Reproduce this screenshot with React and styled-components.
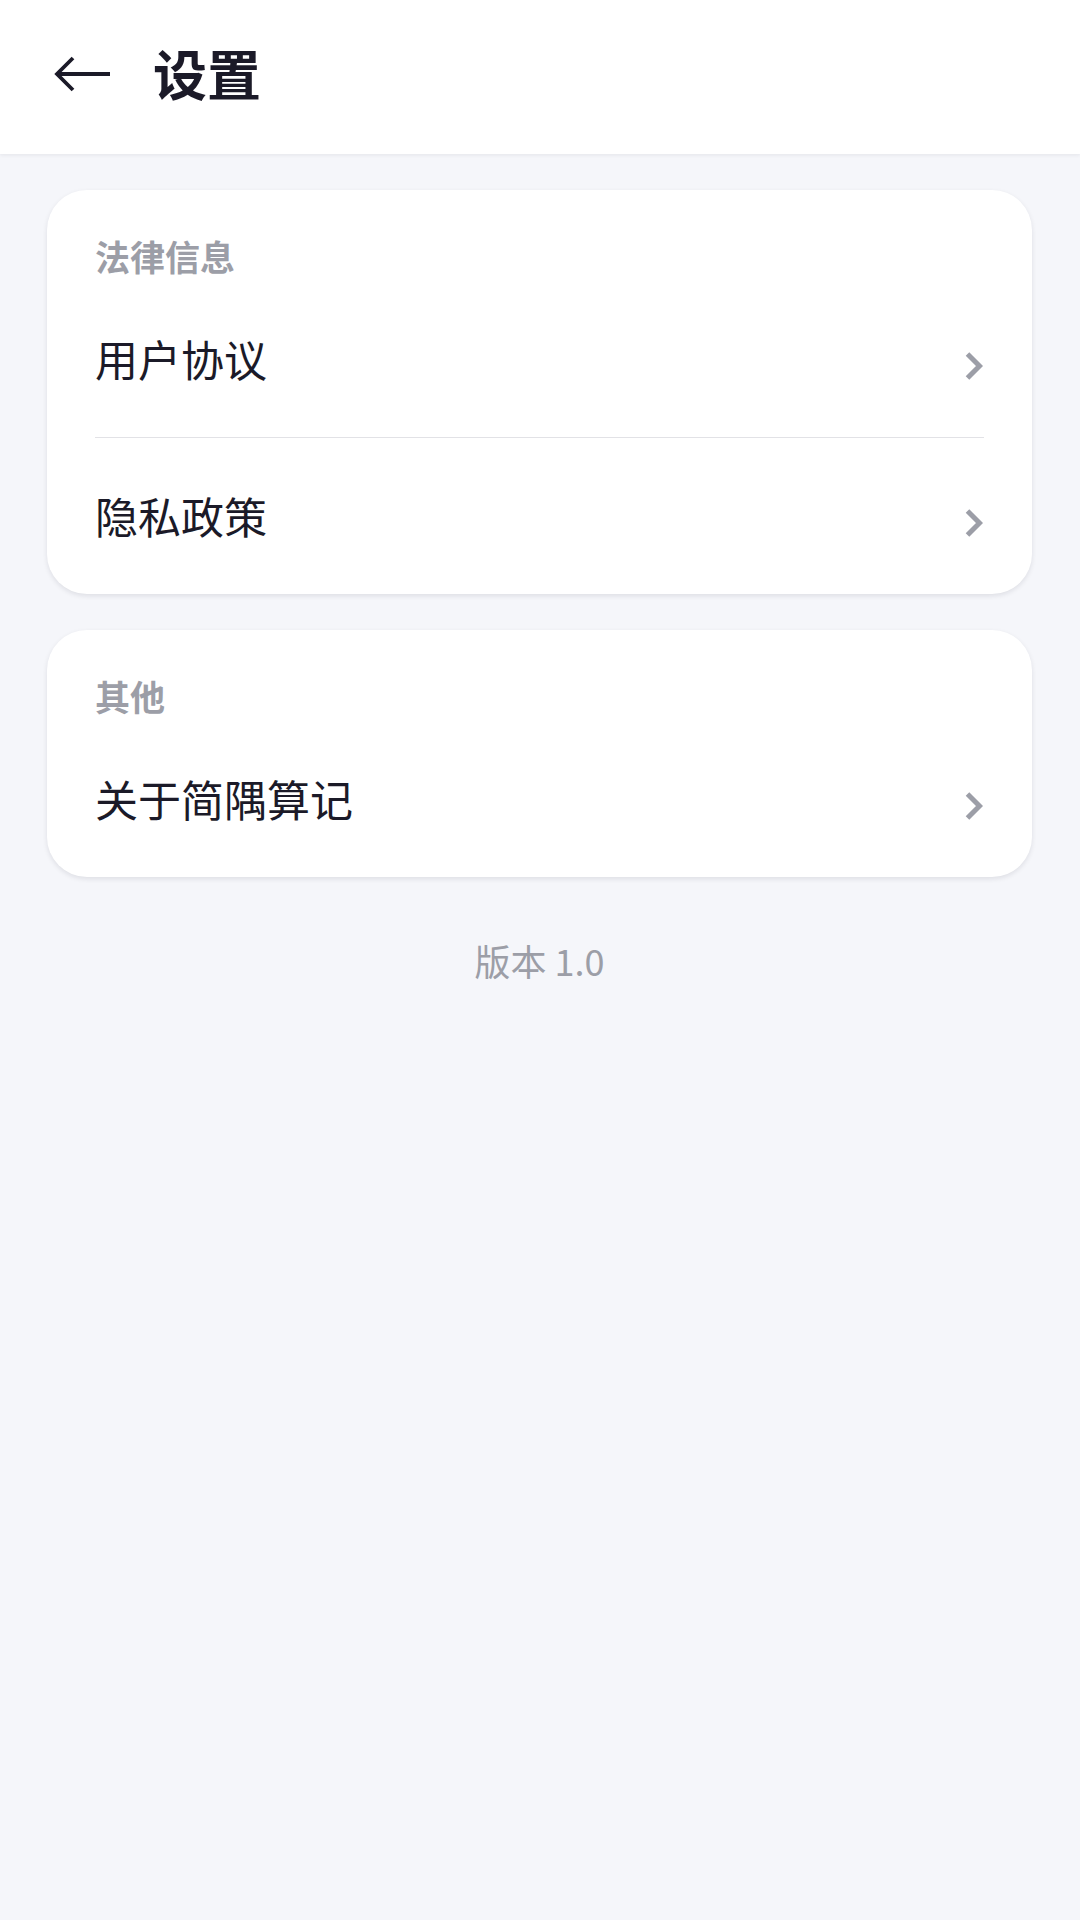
import styled, { createGlobalStyle } from "styled-components";

const GlobalStyle = createGlobalStyle`
  html, body {
    margin: 0;
    padding: 0;
    background: #f5f6fa;
    font-family: "Noto Sans CJK SC", "Noto Sans", sans-serif;
  }
  * {
    box-sizing: border-box;
  }
`;

const Page = styled.div`
  min-height: 1920px;
  background: #f5f6fa;
`;

const Header = styled.header`
  height: 154px;
  display: flex;
  align-items: center;
  gap: 42px;
  padding: 0 0 8px 53px;
  background: #ffffff;
  box-shadow: 0 1px 4px rgba(20, 20, 40, 0.08);
  position: relative;
  z-index: 1;
`;

const BackButton = styled.button`
  border: none;
  background: none;
  padding: 0;
  display: flex;
  align-items: center;
  cursor: pointer;
  margin-top: 2px;
`;

const Title = styled.h1`
  margin: 0;
  font-size: 54px;
  line-height: 1;
  font-weight: 700;
  color: #1b1a28;
`;

const Content = styled.main`
  display: flex;
  flex-direction: column;
  gap: 36px;
  padding: 36px 48px 0 47px;
`;

const Card = styled.section`
  background: #ffffff;
  border-radius: 40px;
  box-shadow: 0 2px 5px rgba(20, 20, 40, 0.1);
  padding-top: 45px;
`;

const SectionLabel = styled.div`
  padding: 0 48px;
  height: 46px;
  font-size: 35px;
  line-height: 42px;
  font-weight: 700;
  color: #9c9ea7;
`;

const Row = styled.div`
  height: 156px;
  display: flex;
  align-items: center;
  justify-content: space-between;
  padding: 0 49px 0 48px;
  cursor: pointer;
`;

const RowText = styled.span`
  font-size: 43px;
  line-height: 1.2;
  color: #1b1a28;
`;

const Chevron = styled.svg`
  margin-top: 14px;
  flex-shrink: 0;
`;

const Divider = styled.div`
  height: 1px;
  margin: 0 48px;
  background: #e2e2e6;
`;

const Version = styled.div`
  margin-top: 26px;
  text-align: center;
  font-size: 36px;
  line-height: 1.2;
  color: #9c9ea7;
`;

const sections = [
  { label: "法律信息", items: ["用户协议", "隐私政策"] },
  { label: "其他", items: ["关于简隅算记"] },
];

function ChevronIcon() {
  return (
    <Chevron width="18" height="28" viewBox="0 0 18 28">
      <polyline
        points="2.5,2 14.5,14 2.5,26"
        fill="none"
        stroke="#9c9ea7"
        strokeWidth="5"
      />
    </Chevron>
  );
}

function App() {
  return (
    <Page>
      <GlobalStyle />
      <Header>
        <BackButton aria-label="返回">
          <svg width="58" height="36" viewBox="0 0 58 36">
            <path
              d="M57 18 H4 M20 2 L4 18 L20 34"
              fill="none"
              stroke="#1b1a28"
              strokeWidth="3.8"
            />
          </svg>
        </BackButton>
        <Title>设置</Title>
      </Header>

      <Content>
        {sections.map((section) => (
          <Card key={section.label}>
            <SectionLabel>{section.label}</SectionLabel>
            {section.items.map((item, i) => (
              <div key={item}>
                {i > 0 && <Divider />}
                <Row>
                  <RowText>{item}</RowText>
                  <ChevronIcon />
                </Row>
              </div>
            ))}
          </Card>
        ))}
        <Version>版本 1.0</Version>
      </Content>
    </Page>
  );
}

export default App;
